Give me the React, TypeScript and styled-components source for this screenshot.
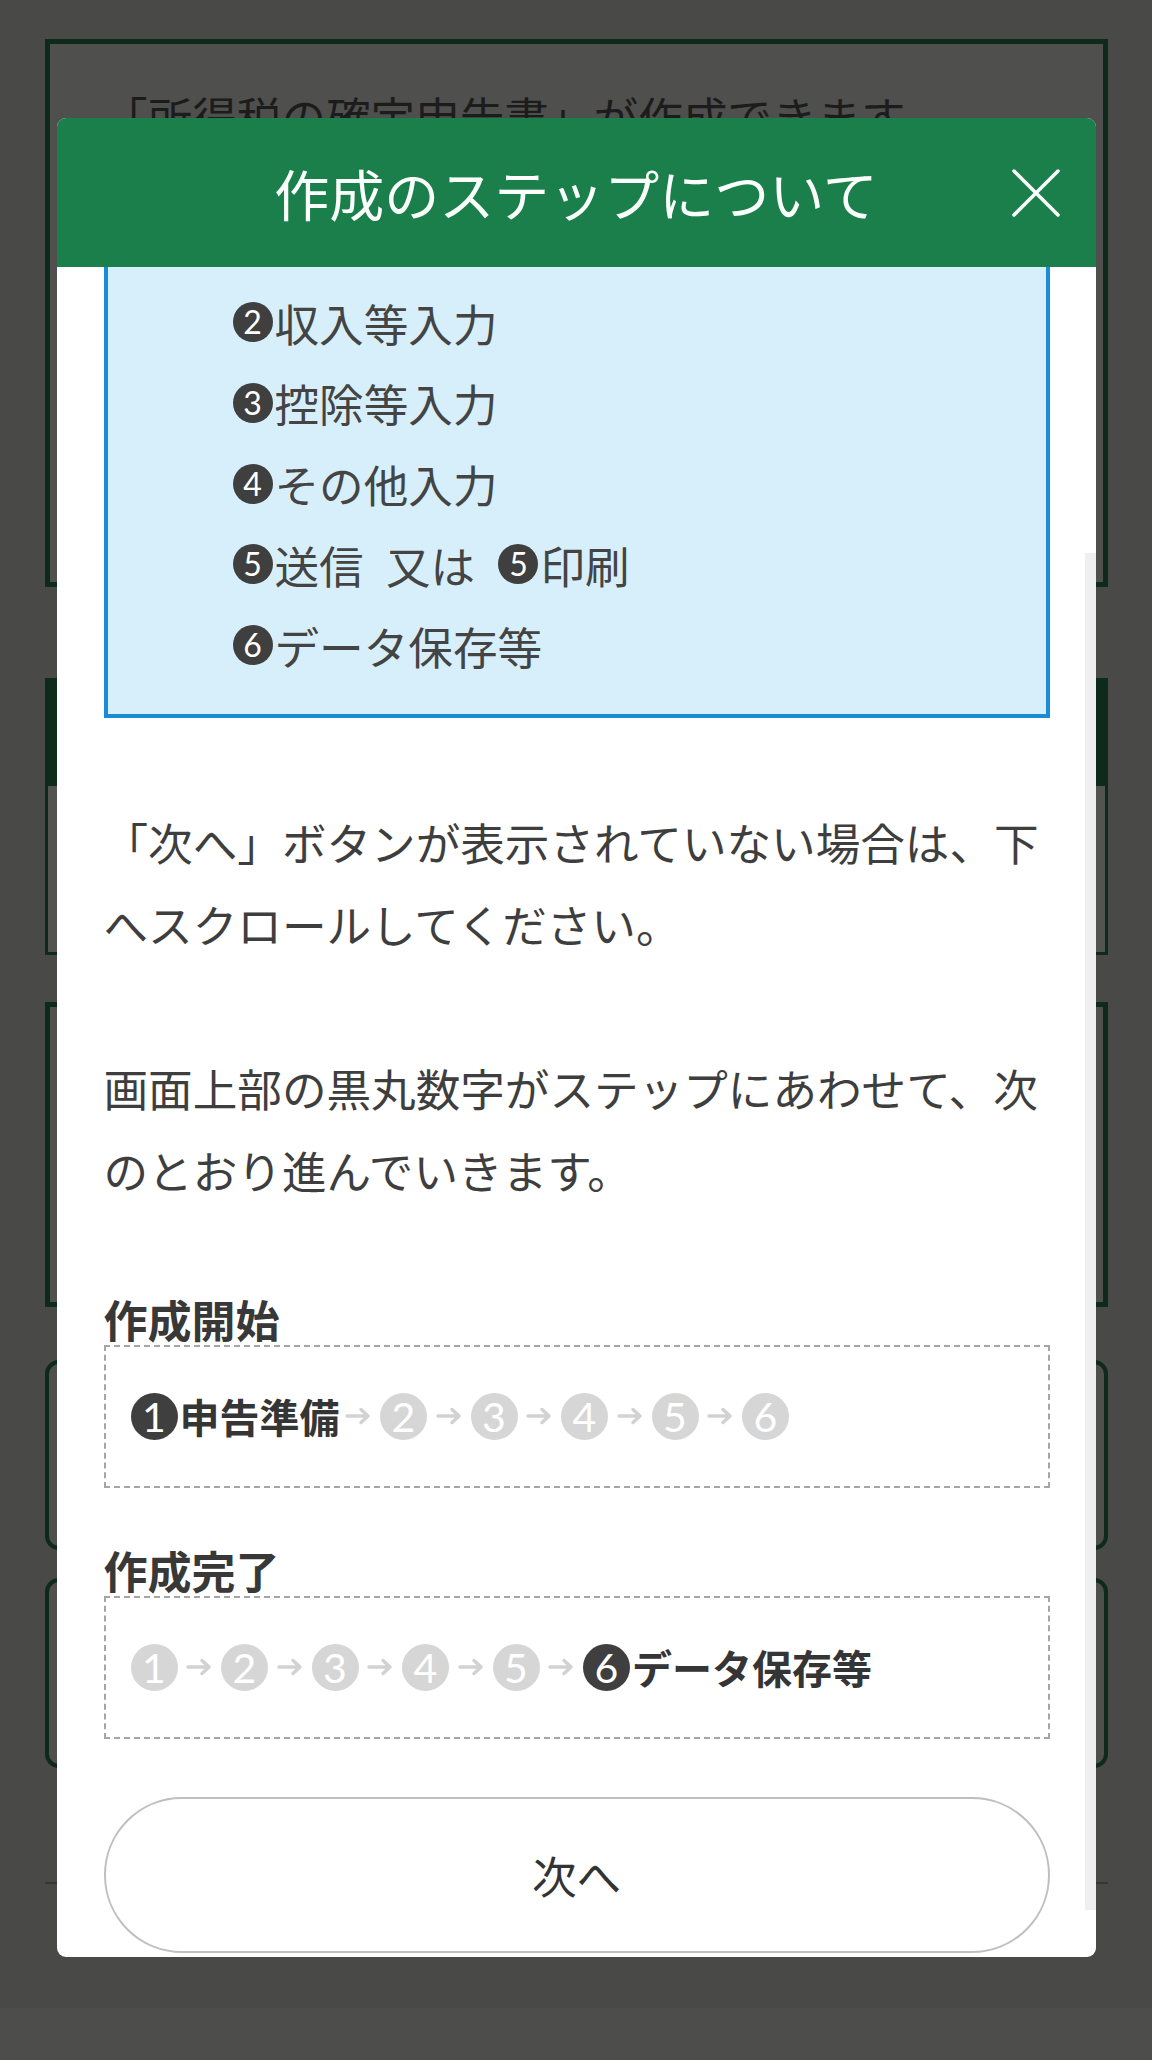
import { useLayoutEffect, useRef } from "react";
import styled, { createGlobalStyle } from "styled-components";

const GlobalStyle = createGlobalStyle`
  html, body {
    margin: 0;
    padding: 0;
  }
  body {
    background: #494947;
    font-family: "Noto Sans CJK JP", "Noto Sans", sans-serif;
    color: #3e3e3e;
  }
`;

const Page = styled.div`
  position: relative;
  width: 1152px;
  height: 2060px;
  overflow: hidden;
  background: #494947;
`;

// dimmed page behind the dialog
const BackPage = styled.div`
  display: flex;
  flex-direction: column;
  padding: 39px 44px 0 45px;
`;

const BackCard = styled.section<{ $top: number; $height: number; $radius?: number; $border?: number }>`
  box-sizing: border-box;
  margin-top: ${(p) => p.$top}px;
  height: ${(p) => p.$height}px;
  border: ${(p) => p.$border ?? 5}px solid #0e2a1b;
  border-radius: ${(p) => p.$radius ?? 0}px;
  background: #4f4f4d;
  overflow: hidden;
`;

const BackCardHead = styled.div`
  height: 105px;
  background: #0e2a1b;
`;

const BackCardBody = styled.div`
  height: 100%;
  background: #535351;
`;

const BackLead = styled.p`
  margin: 0;
  padding: 42px 0 0 53px;
  font-size: 44.6px;
  line-height: 60px;
  color: #1c1c1c;
`;

const BackRule = styled.hr`
  margin: 114px 0 0;
  height: 2px;
  border: 0;
  background: #363634;
`;

const BackFooter = styled.footer`
  margin: 124px -44px 0 -45px;
  height: 52px;
  background: #4d4d4b;
`;

// dialog
const Overlay = styled.div`
  position: absolute;
  inset: 0;
  display: flex;
  justify-content: center;
  align-items: flex-start;
  padding-top: 118px;
`;

const Modal = styled.div`
  position: relative;
  display: flex;
  flex-direction: column;
  width: 1039px;
  height: 1839px;
  background: #fff;
  border-radius: 9px;
  overflow: hidden;
`;

const ModalHeader = styled.header`
  flex: 0 0 149px;
  display: grid;
  grid-template-columns: 1fr auto 1fr;
  align-items: center;
  background: #1a7f4b;
`;

const Title = styled.h2`
  grid-column: 2;
  margin: 0;
  font-size: 55px;
  font-weight: 400;
  line-height: 1;
  color: #fbfffc;
`;

const CloseButton = styled.button`
  grid-column: 3;
  justify-self: end;
  display: flex;
  align-items: center;
  justify-content: center;
  width: 56px;
  height: 56px;
  margin-right: 32px;
  padding: 0;
  border: 0;
  background: none;
  cursor: pointer;
`;

const ModalBody = styled.div`
  flex: 1;
  overflow: hidden;
`;

const Content = styled.div`
  padding: 40px 46px 60px 47px;
`;

const ScrollThumb = styled.div`
  position: absolute;
  top: 435px;
  right: 0;
  width: 11px;
  height: 1357px;
  background: #efefef;
`;

const StepList = styled.ul`
  list-style: none;
  margin: 0;
  padding: 28px 0 28px 124px;
  background: #d7effa;
  border: 4px solid #1a8bd6;
`;

const StepItem = styled.li`
  display: flex;
  align-items: center;
  height: 80.75px;
  font-size: 44.6px;
  white-space: pre;
  color: #444;
`;

const Text = styled.p<{ $top: number }>`
  margin: ${(p) => p.$top}px 0 0;
  font-size: 44.6px;
  line-height: 82px;
  color: #3e3e3e;
`;

const SubHeading = styled.h3<{ $top: number }>`
  margin: ${(p) => p.$top}px 0 0;
  font-size: 44px;
  font-weight: 700;
  line-height: 44px;
  color: #383838;
`;

const FlowBox = styled.div`
  display: flex;
  align-items: center;
  margin-top: 4px;
  padding: 46px 25px;
  border: 2px dashed #a5a5a5;
`;

const Badge = styled.span<{ $tone: "dark" | "light"; $size: number; $digit: number }>`
  display: inline-flex;
  flex: none;
  align-items: center;
  justify-content: center;
  width: ${(p) => p.$size}px;
  height: ${(p) => p.$size}px;
  border-radius: 50%;
  background: ${(p) => (p.$tone === "dark" ? "#3f3f3f" : "#d6d6d6")};
  color: #fff;
  font-family: Lato, "Noto Sans", sans-serif;
  font-size: ${(p) => p.$digit}px;
  font-weight: 400;
  line-height: 1;
`;

const ListBadge = styled(Badge)`
  margin: 0 2px 0 1px;
`;

const FlowLabel = styled.span`
  margin: 0 -3px 0 2px;
  font-size: 40px;
  font-weight: 700;
  line-height: 1;
  color: #353535;
`;

const ArrowCell = styled.span`
  display: inline-flex;
  flex: none;
  align-items: center;
  justify-content: center;
  width: 43.5px;
`;

const NextButton = styled.button`
  display: block;
  width: 100%;
  height: 156px;
  margin-top: 58px;
  border: 2px solid #bfbfbf;
  border-radius: 78px;
  background: #fff;
  font-family: inherit;
  font-size: 44.6px;
  color: #333;
  cursor: pointer;
`;

const Arrow = () => (
  <ArrowCell>
    <svg width="26" height="18" viewBox="0 0 26 18" fill="none">
      <path d="M2 9H23M16 2.5L23 9L16 15.5" stroke="#d2d2d2" strokeWidth="3.5" strokeLinecap="round" strokeLinejoin="round" />
    </svg>
  </ArrowCell>
);

const steps = [
  { no: 1, label: "申告準備" },
  { no: 2, label: "収入等入力" },
  { no: 3, label: "控除等入力" },
  { no: 4, label: "その他入力" },
  { no: 5, label: "送信\u2002又は\u2002", extra: "印刷" },
  { no: 6, label: "データ保存等" },
];

const FlowRow = ({ current, label }: { current: number; label: string }) => (
  <FlowBox>
    {[1, 2, 3, 4, 5, 6].map((n) => (
      <span key={n} style={{ display: "contents" }}>
        <Badge $tone={n === current ? "dark" : "light"} $size={47} $digit={41}>
          {n}
        </Badge>
        {n === current && <FlowLabel>{label}</FlowLabel>}
        {n < 6 && <Arrow />}
      </span>
    ))}
  </FlowBox>
);

export default function App() {
  const bodyRef = useRef<HTMLDivElement>(null);

  // the dialog is shown scrolled down a little
  useLayoutEffect(() => {
    if (bodyRef.current) bodyRef.current.scrollTop = 138;
  }, []);

  return (
    <Page>
      <GlobalStyle />
      <BackPage>
        <BackCard $top={0} $height={548}>
          <BackLead>「所得税の確定申告書」が作成できます</BackLead>
        </BackCard>
        <BackCard $top={91} $height={277} $border={3}>
          <BackCardHead />
          <BackCardBody />
        </BackCard>
        <BackCard $top={47} $height={305} />
        <BackCard $top={53} $height={190} $radius={14} $border={4} />
        <BackCard $top={28} $height={190} $radius={14} $border={4} />
        <BackRule />
        <BackFooter />
      </BackPage>

      <Overlay>
        <Modal>
          <ModalHeader>
            <Title>作成のステップについて</Title>
            <CloseButton aria-label="閉じる">
              <svg width="52" height="52" viewBox="0 0 52 52">
                <path d="M4 4L48 48M48 4L4 48" stroke="#fff" strokeWidth="3.5" strokeLinecap="round" />
              </svg>
            </CloseButton>
          </ModalHeader>
          <ModalBody ref={bodyRef}>
            <Content>
              <StepList>
                {steps.map((s) => (
                  <StepItem key={s.no}>
                    <ListBadge $tone="dark" $size={40} $digit={32}>
                      {s.no}
                    </ListBadge>
                    <span>{s.label}</span>
                    {s.extra && (
                      <>
                        <ListBadge $tone="dark" $size={40} $digit={32}>
                          {s.no}
                        </ListBadge>
                        <span>{s.extra}</span>
                      </>
                    )}
                  </StepItem>
                ))}
              </StepList>

              <Text $top={83}>「次へ」ボタンが表示されていない場合は、下へスクロールしてください。</Text>
              <Text $top={82}>画面上部の黒丸数字がステップにあわせて、次のとおり進んでいきます。</Text>

              <SubHeading $top={86}>作成開始</SubHeading>
              <FlowRow current={1} label="申告準備" />

              <SubHeading $top={60}>作成完了</SubHeading>
              <FlowRow current={6} label="データ保存等" />

              <NextButton>次へ</NextButton>
            </Content>
          </ModalBody>
          <ScrollThumb />
        </Modal>
      </Overlay>
    </Page>
  );
}
